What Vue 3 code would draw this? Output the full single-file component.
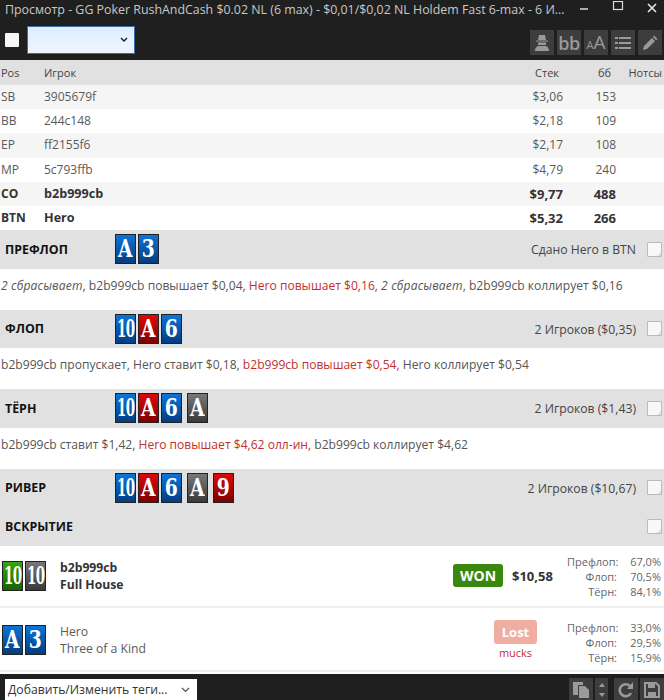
<script setup>
const players = [
  { pos: 'SB', name: '3905679f', stack: '$3,06', bb: '153', shade: true },
  { pos: 'BB', name: '244c148', stack: '$2,18', bb: '109' },
  { pos: 'EP', name: 'ff2155f6', stack: '$2,17', bb: '108', shade: true },
  { pos: 'MP', name: '5c793ffb', stack: '$4,79', bb: '240' },
  { pos: 'CO', name: 'b2b999cb', stack: '$9,77', bb: '488', shade: true, bold: true },
  { pos: 'BTN', name: 'Hero', stack: '$5,32', bb: '266', bold: true },
]
const c = (r, s, gap) => ({ r, s, gap })
const flop = [c('10', 'd'), c('A', 'h'), c('6', 'd')]
const turn = [...flop, c('A', 'x', true)]
const river = [...turn, c('9', 'h', true)]
const streets = [
  { title: 'ПРЕФЛОП', cards: [c('A', 'd'), c('3', 'd')], right: 'Сдано Hero в BTN', actions: [
    { t: '2 сбрасывает', i: true }, { t: ', b2b999cb повышает $0,04, ' }, { t: 'Hero повышает $0,16,', r: true }, { t: ' ' }, { t: '2 сбрасывает', i: true }, { t: ', b2b999cb коллирует $0,16' }] },
  { title: 'ФЛОП', cards: flop, right: '2 Игроков ($0,35)', actions: [
    { t: 'b2b999cb пропускает, Hero ставит $0,18, ' }, { t: 'b2b999cb повышает $0,54,', r: true }, { t: ' Hero коллирует $0,54' }] },
  { title: 'ТЁРН', cards: turn, right: '2 Игроков ($1,43)', actions: [
    { t: 'b2b999cb ставит $1,42, ' }, { t: 'Hero повышает $4,62 олл-ин,', r: true }, { t: ' b2b999cb коллирует $4,62' }] },
  { title: 'РИВЕР', cards: river, right: '2 Игроков ($10,67)' },
  { title: 'ВСКРЫТИЕ', cards: [], right: '' },
]
</script>

<template>
  <div class="app">
    <header class="top">
      <div class="title">
        <span class="title-text">Просмотр - GG Poker RushAndCash $0.02 NL (6 max) - $0,01/$0,02 NL Holdem Fast 6-max  - 6 И...</span>
        <div class="win">
          <svg width="12" height="12" viewBox="0 0 12 12"><path d="M2 8h8" stroke="#ddd" stroke-width="1.5"/></svg>
          <svg width="12" height="12" viewBox="0 0 12 12"><rect x="1.5" y="0.5" width="9" height="8" fill="none" stroke="#ddd" stroke-width="1.2"/></svg>
          <svg width="12" height="12" viewBox="0 0 12 12"><path d="M2 3l8 8M10 3l-8 8" stroke="#eee" stroke-width="1.5"/></svg>
        </div>
      </div>
      <div class="tools">
        <span class="check white"></span>
        <div class="select"><svg width="8" height="6" viewBox="0 0 8 6"><path d="M1 1l3 3 3-3" fill="none" stroke="#222" stroke-width="1.5"/></svg></div>
        <div class="tool-btns">
          <span class="tbtn"><svg width="16" height="18" viewBox="0 0 16 18"><path d="M5 1h6l1 5H4z" fill="#9a9a9a"/><path d="M2 6.500h12v1H2zM4 8.500h8V11H4zM1 17c0-3.500 2-5 4-5h6c2 0 4 1.500 4 5z" fill="#9a9a9a"/></svg></span>
          <span class="tbtn bb">bb</span>
          <span class="tbtn aa"><small>A</small>A</span>
          <span class="tbtn"><svg width="16" height="14" viewBox="0 0 16 14"><path d="M0 1h3v2H0zM4 1h12v2H4zM0 6h3v2H0zM4 6h12v2H4zM0 11h3v2H0zM4 11h12v2H4z" fill="#9a9a9a"/></svg></span>
          <span class="tbtn"><svg width="16" height="16" viewBox="0 0 16 16"><path d="M1 15l1-4 8-8 3 3-8 8zM11 2l1-1.500 3.500 3.500-1.500 1z" fill="#9a9a9a"/></svg></span>
        </div>
      </div>
    </header>

    <main class="content">
      <div class="row head">
        <span class="pos">Pos</span><span class="name">Игрок</span><span class="stack">Стек</span><span class="bbs">бб</span><span class="notes">Нотсы</span>
      </div>
      <div v-for="p in players" :key="p.pos" class="row" :class="{ shade: p.shade, bold: p.bold }">
        <span class="pos">{{ p.pos }}</span><span class="name">{{ p.name }}</span><span class="stack">{{ p.stack }}</span><span class="bbs">{{ p.bb }}</span><span class="notes"></span>
      </div>

      <template v-for="s in streets" :key="s.title">
        <section class="street">
          <strong class="st-title">{{ s.title }}</strong>
          <div class="cards">
            <span v-for="(k, i) in s.cards" :key="i" class="card" :class="[k.s, { gap: k.gap }]"><span :class="k.r === '10' ? 'ten' : 'rank'">{{ k.r }}</span></span>
          </div>
          <span class="st-right">{{ s.right }}</span>
          <span class="note-box"></span>
        </section>
        <p v-if="s.actions" class="actions"><span v-for="(a, i) in s.actions" :key="i" :class="{ it: a.i, red: a.r }">{{ a.t }}</span></p>
      </template>

      <div class="result first">
        <div class="cards two"><span class="card c"><span class="ten">10</span></span><span class="card x"><span class="ten">10</span></span></div>
        <div class="who bold"><div class="nm">b2b999cb</div><div>Full House</div></div>
        <span class="won">WON</span><span class="amount">$10,58</span>
        <div class="equity">
          <span>Префлоп:</span><span>67,0%</span><span>Флоп:</span><span>70,5%</span><span>Тёрн:</span><span>84,1%</span>
        </div>
      </div>
      <div class="result second">
        <div class="cards two"><span class="card d"><span class="rank">A</span></span><span class="card d"><span class="rank">3</span></span></div>
        <div class="who"><div>Hero</div><div>Three of a Kind</div></div>
        <div class="lostbox"><span class="lost">Lost</span><span class="mucks">mucks</span></div>
        <div class="equity">
          <span>Префлоп:</span><span>33,0%</span><span>Флоп:</span><span>29,5%</span><span>Тёрн:</span><span>15,9%</span>
        </div>
      </div>
    </main>

    <footer class="foot">
      <div class="tag">Добавить/Изменить теги...<svg width="9" height="6" viewBox="0 0 9 6"><path d="M1 1l3.500 3.500L8 1" fill="none" stroke="#555" stroke-width="1.2"/></svg></div>
      <div class="foot-btns">
        <span class="fbtn"><svg width="18" height="19" viewBox="0 0 18 19"><path d="M1 2h10v3H6v10H1zM7 6h6l4 4v8H7z" fill="#9a9a9a"/></svg></span>
        <span class="fbtn narrow"><svg width="8" height="16" viewBox="0 0 8 16"><path d="M4 1l3 4H1zM4 15l3-4H1z" fill="#9a9a9a"/></svg></span>
        <span class="fbtn"><svg width="18" height="18" viewBox="0 0 18 18"><path d="M14 12a6 6 0 1 1-1-7" fill="none" stroke="#9a9a9a" stroke-width="2.600"/><path d="M16 1v7H10z" fill="#9a9a9a"/></svg></span>
        <span class="fbtn"><svg width="16" height="16" viewBox="0 0 16 16"><path d="M1 1h11l3 3v11H1z" fill="none" stroke="#9a9a9a" stroke-width="2"/><path d="M4 2h7v4H4zM4 10h8v5H4z" fill="#9a9a9a"/></svg></span>
      </div>
    </footer>
  </div>
</template>

<style>
html, body { margin: 0; background: #fff; overflow: hidden; }
</style>

<style scoped>
.app { width: 664px; height: 700px; display: flex; flex-direction: column; font: 12px/16px "Open Sans", sans-serif; color: #555; overflow: hidden; }
.top { background: #1f1f1f; height: 60px; flex: none; }
.title { height: 20px; display: flex; justify-content: space-between; color: #c8c8c8; font-size: 12.4px; line-height: 19px; padding-left: 5px; white-space: pre; overflow: hidden; }
.title-text { width: 570px; flex: none; overflow: hidden; }
.win { display: flex; gap: 22px; padding: 1px 6px 0 0; flex: none; align-items: flex-start; margin-left: auto; }
.tools { height: 40px; display: flex; align-items: center; padding-left: 5px; }
.check { width: 14px; height: 14px; background: #f5f5f5; border-radius: 1px; }
.select { width: 108px; height: 28px; margin-left: 8px; background: linear-gradient(#ddeeff, #eef6ff); border: 1px solid #3a6ea5; display: flex; align-items: center; justify-content: flex-end; padding-right: 6px; box-sizing: border-box; }
.tool-btns { margin-left: auto; display: flex; gap: 3px; padding-right: 2px; margin-top: 5px; }
.tbtn { width: 24px; height: 25px; background: #3d3d3d; color: #9a9a9a; display: flex; align-items: center; justify-content: center; }
.bb { font: 600 18px/24px "Open Sans", sans-serif; letter-spacing: -0.5px; }
.aa { font: 400 19px/24px "Open Sans", sans-serif; align-items: baseline; }
.aa small { font-size: 11px; }

.content { flex: 1; min-height: 0; }
.row { display: flex; align-items: center; height: 24.2px; padding-left: 1px; padding-right: 1px; color: #5a5a5a; box-sizing: border-box; }
.row.head { height: 25px; background: #e1e1e1; font-size: 11px; color: #444; padding-right: 0; }
.row.shade { background: #f5f5f5; }
.row.bold { font-weight: 700; color: #333; }
.row.bold .name { font-size: 12.6px; }
.row.bold .stack, .row.bold .bbs { font-size: 13px; }
.pos { width: 43px; }
.name { flex: 1; }
.stack { width: 60px; text-align: right; margin-right: 1px; }
.bbs { width: 52px; text-align: right; }
.head .stack { margin-right: 5px; }
.head .bbs { margin-right: 5px; width: 47px; }
.notes { width: 47px; text-align: right; padding-right: 2px; box-sizing: border-box; }
.head .notes { width: 48px; }

.street { height: 38.5px; background: #e1e1e1; display: flex; align-items: center; padding-left: 5px; }
.st-title { width: 110px; color: #111; font-weight: 700; font-size: 12.4px; flex: none; margin-top: 1px; }
.cards { display: flex; gap: 2px; }
.st-right { margin-left: auto; color: #444; font-size: 12.2px; margin-top: 2px; }
.note-box { width: 15px; height: 15px; margin: 0 2px 0 11px; background: linear-gradient(135deg, #f8f8f8 80%, #ccc); border: 1px solid #bbb; border-radius: 1px; box-sizing: border-box; flex: none; }
.card { width: 21px; height: 30px; box-sizing: border-box; border: 1px solid #222; color: #fff; font: 700 24px/27px "DejaVu Serif", serif; text-align: center; overflow: hidden; flex: none; display: flex; justify-content: center; }
.rank { display: block; transform: scaleX(.78); flex: none; }
.ten { display: block; transform: scaleX(.56); letter-spacing: -1px; white-space: nowrap; flex: none; }
.card.gap { margin-left: 3px; }
.card.d { background: linear-gradient(#0d74d8, #033d80); }
.card.h { background: linear-gradient(#dd0808, #7f0000); }
.card.x { background: linear-gradient(#777, #3a3a3a); }
.card.c { background: linear-gradient(#34a80e, #1c6100); }

.actions { height: 41px; margin: 0; line-height: 34px; padding-left: 1px; color: #555; white-space: pre; font-size: 12.1px; }
.it { font-style: italic; letter-spacing: 0.15px; }
.red { color: #c0312b; }

.result { display: flex; align-items: center; padding-left: 2px; border-bottom: 2px solid #eee; color: #5a5a5a; box-sizing: border-box; }
.result.first { height: 62.5px; }
.result.second { height: 63.5px; padding-top: 3px; }
.result .who { margin-left: 12px; line-height: 17px; flex: 1; font-size: 12.2px; }
.two { width: 46px; }
.who.bold { font-weight: 700; color: #333; }
.won { background: #3a8710; color: #fff; font-weight: 700; font-size: 14px; width: 50px; text-align: center; height: 23px; line-height: 23px; border-radius: 3px; margin-right: 9px; }
.amount { width: 55px; font-weight: 700; font-size: 13px; color: #333; }
.equity { display: grid; grid-template-columns: 50px 44px; font-size: 11px; line-height: 15px; text-align: right; color: #666; padding-right: 3px; margin-top: 2px; }
.second .equity { margin-top: 5px; }
.lostbox { display: flex; flex-direction: column; align-items: center; margin-right: 30px; }
.lost { width: 43px; height: 24px; border-radius: 3px; background: #f0aea1; color: #fff; font-weight: 700; font-size: 13px; text-align: center; line-height: 24px; }
.mucks { color: #c0312b; font-size: 11px; line-height: 17px; }
.foot { background: #1f1f1f; flex: none; height: 26px; display: flex; align-items: center; padding-left: 5px; }
.tag { width: 192px; height: 21px; box-sizing: border-box; background: #fff; color: #333; display: flex; align-items: center; justify-content: space-between; padding: 0 7px 0 3px; margin-top: 5px; font-size: 12.2px; }
.foot-btns { margin-left: auto; display: flex; gap: 2px; padding-top: 5px; }
.fbtn { width: 24px; height: 24px; background: #3d3d3d; display: flex; align-items: center; justify-content: center; }
.fbtn.narrow { width: 13px; margin-right: 4px; }
</style>
